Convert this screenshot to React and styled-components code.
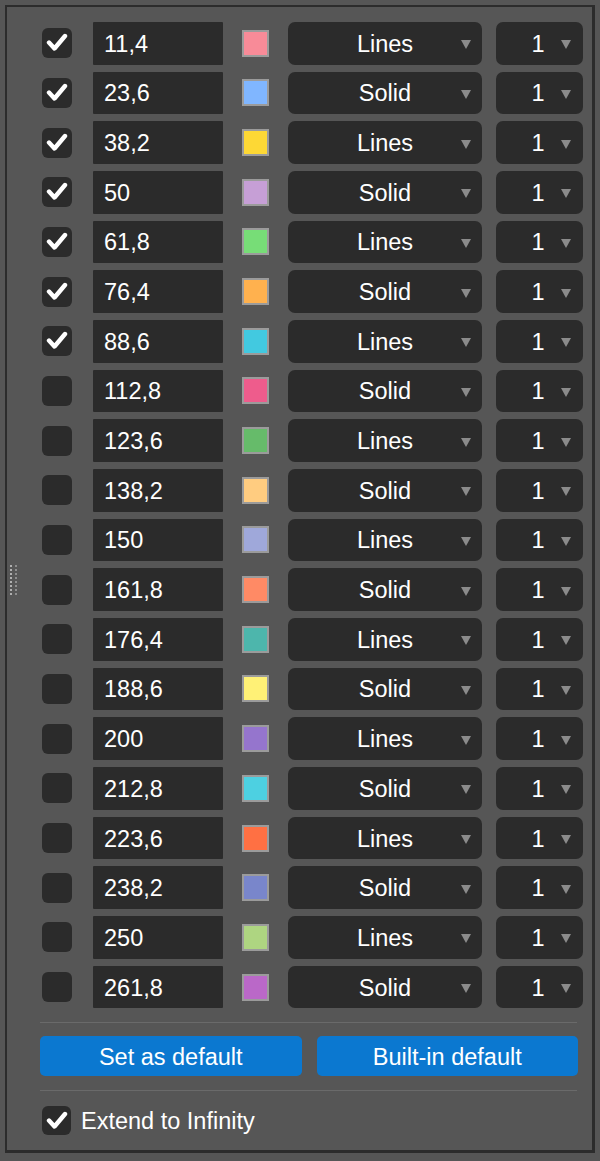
import React from "react";
import styled, { createGlobalStyle } from "styled-components";

const Global = createGlobalStyle`
  html, body { margin: 0; padding: 0; background: #565656; }
  body { font-family: "Liberation Sans", Arial, sans-serif; color: #fff; }
`;

const Panel = styled.div`
  position: relative;
  margin: 5px;
  width: 590px;
  box-sizing: border-box;
  border-style: solid;
  border-color: #2c2c2c;
  border-width: 2px 3px 3px 2px;
  background: #565656;
  padding: 15px 9px 15px 33px;
  display: flex;
  flex-direction: column;
`;

const Handle = styled.svg`
  position: absolute;
  left: 3px;
  top: 558px;
`;

const Rows = styled.div`
  display: flex;
  flex-direction: column;
  gap: 7.18px;
`;

const Row = styled.div`
  display: flex;
  align-items: center;
  height: 42.5px;
`;

const Box = styled.div`
  width: ${(p) => p.$size}px;
  height: ${(p) => p.$size}px;
  margin-left: 2px;
  border-radius: 6px;
  background: #2b2b2b;
  display: flex;
  align-items: center;
  justify-content: center;
  flex: none;
`;

const ValueInput = styled.div`
  margin-left: 21px;
  width: 130px;
  height: 100%;
  box-sizing: border-box;
  background: #2b2b2b;
  border-radius: 1px;
  padding: 2px 0 0 11px;
  display: flex;
  align-items: center;
  font-size: 23.5px;
  color: #fff;
  flex: none;
`;

const Swatch = styled.div`
  margin-left: 19px;
  width: 27px;
  height: 27px;
  box-sizing: border-box;
  border: 2px solid #9b9b9b;
  background: ${(p) => p.$color};
  flex: none;
`;

const Select = styled.div`
  position: relative;
  margin-left: ${(p) => p.$gap}px;
  width: ${(p) => p.$w}px;
  height: 100%;
  background: #2b2b2b;
  border-radius: 7px;
  display: flex;
  align-items: center;
  justify-content: center;
  font-size: 23.5px;
  color: #fff;
  padding: 2px ${(p) => p.$pr || 0}px 0 0;
  box-sizing: border-box;
  flex: none;
`;

const Arrow = styled.span`
  position: absolute;
  right: ${(p) => p.$right}px;
  top: 50%;
  margin-top: -3px;
  width: 0;
  height: 0;
  border-left: 5px solid transparent;
  border-right: 5px solid transparent;
  border-top: 9px solid #8b8b8b;
`;

const Divider = styled.div`
  height: 1px;
  background: #6a6a6a;
  margin-right: 6px;
`;

const Footer = styled.div`
  display: flex;
  flex-direction: column;
  margin-top: 14px;
`;

const Buttons = styled.div`
  display: flex;
  gap: 15px;
  margin: 13px 5px 14px 0;
`;

const Button = styled.button`
  flex: 1;
  height: 40px;
  border: none;
  border-radius: 5px;
  background: #0b78d0;
  color: #fff;
  font-family: "Liberation Sans", Arial, sans-serif;
  font-size: 23.5px;
  padding: 2px 0 0;
  cursor: pointer;
`;

const Extend = styled.label`
  display: flex;
  align-items: center;
  gap: 10px;
  margin-top: 15px;
  font-size: 23.5px;
  color: #fff;
`;

const ExtendText = styled.span`
  padding-top: 2px;
`;

const Check = () => (
  <svg width="22" height="20" viewBox="0 0 22 20">
    <polyline
      points="3,9.5 8.5,15.5 19,3"
      fill="none"
      stroke="#fff"
      strokeWidth="4.4"
      strokeLinecap="round"
      strokeLinejoin="round"
    />
  </svg>
);

const levels = [
  ["11,4", "#f88b98", true],
  ["23,6", "#80b6ff", true],
  ["38,2", "#fdd835", true],
  ["50", "#c69fd6", true],
  ["61,8", "#77dd77", true],
  ["76,4", "#ffb14e", true],
  ["88,6", "#42c9e0", true],
  ["112,8", "#ee5c8c", false],
  ["123,6", "#66bb6a", false],
  ["138,2", "#ffcc80", false],
  ["150", "#9fa8da", false],
  ["161,8", "#ff8a65", false],
  ["176,4", "#4db6ac", false],
  ["188,6", "#fff176", false],
  ["200", "#9575cd", false],
  ["212,8", "#4dd0e1", false],
  ["223,6", "#ff7043", false],
  ["238,2", "#7986cb", false],
  ["250", "#aed581", false],
  ["261,8", "#ba68c8", false],
];

export default function App() {
  return (
    <>
      <Global />
      <Panel>
        <Handle width="10" height="40" viewBox="0 0 10 40">
          {Array.from({ length: 8 }).map((_, i) => (
            <g key={i}>
              <rect x="0" y={i * 4} width="2" height="2" fill="#b0b0b0" />
              <rect x="5" y={i * 4} width="2" height="2" fill="#8e8e8e" />
            </g>
          ))}
        </Handle>
        <Rows>
          {levels.map(([v, c, on], i) => (
            <Row key={v}>
              <Box $size={30}>{on && <Check />}</Box>
              <ValueInput>{v}</ValueInput>
              <Swatch $color={c} />
              <Select $gap={19} $w={194}>
                {i % 2 === 0 ? "Lines" : "Solid"}
                <Arrow $right={11} />
              </Select>
              <Select $gap={14} $w={87} $pr={3}>
                1
                <Arrow $right={12} />
              </Select>
            </Row>
          ))}
        </Rows>
        <Footer>
          <Divider />
          <Buttons>
            <Button>Set as default</Button>
            <Button>Built-in default</Button>
          </Buttons>
          <Divider />
          <Extend>
            <Box $size={29}>
              <Check />
            </Box>
            <ExtendText>Extend to Infinity</ExtendText>
          </Extend>
        </Footer>
      </Panel>
    </>
  );
}
